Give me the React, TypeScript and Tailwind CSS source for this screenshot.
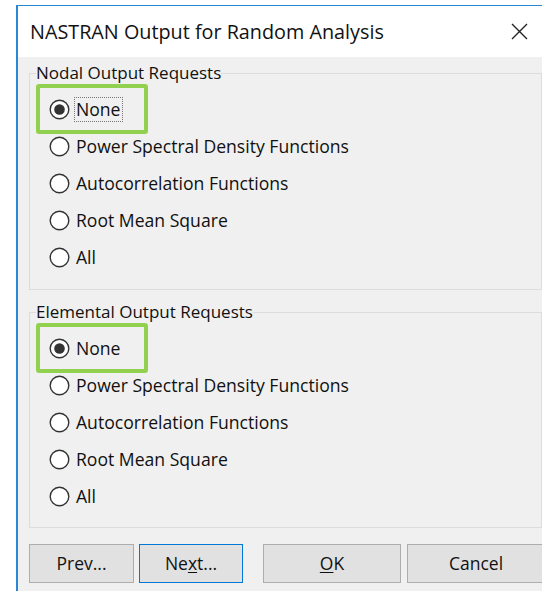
import React, { useState } from "react";

const options = [
  "None",
  "Power Spectral Density Functions",
  "Autocorrelation Functions",
  "Root Mean Square",
  "All",
];

const Radio = ({ checked }: { checked: boolean }) => (
  <svg width="21" height="21" viewBox="0 0 21 21" className="shrink-0">
    <circle cx="10.5" cy="10.5" r="9.3" fill="#ffffff" stroke="#333333" strokeWidth="1.4" />
    {checked && <circle cx="10.5" cy="10.5" r="5.3" fill="#333333" />}
  </svg>
);

const OutputGroup = ({
  title,
  focused,
  className,
}: {
  title: string;
  focused?: boolean;
  className?: string;
}) => {
  const [value, setValue] = useState("None");

  return (
    <fieldset className={`ml-[11px] w-[513px] border border-[#dcdcdc] pt-[6px] ${className ?? ""}`}>
      <legend className="ml-[6px] leading-[24px] text-[17px] text-[#111]">{title}</legend>
      {options.map((opt) => {
        const checked = value === opt;
        return (
          <div
            key={opt}
            className="relative flex h-[37px] items-center pl-[19px] cursor-default"
            onClick={() => setValue(opt)}
          >
            <Radio checked={checked} />
            <span
              className={`ml-[4px] px-[1px] border leading-[23px] text-[17.6px] text-[#111] ${
                focused && checked ? "border-dotted border-[#777]" : "border-transparent"
              }`}
            >
              {opt}
            </span>
            {opt === "None" && (
              <div className="pointer-events-none absolute left-[6px] top-[-7px] h-[50px] w-[112px] rounded-[3px] border-[4px] border-[#92d050]" />
            )}
          </div>
        );
      })}
    </fieldset>
  );
};

const Button = ({
  children,
  width,
  active,
}: {
  children: React.ReactNode;
  width: string;
  active?: boolean;
}) => (
  <button
    className={`${width} h-[39px] border bg-[#e1e1e1] text-[17.5px] text-[#111] ${
      active ? "border-[#0078d7]" : "border-[#adadad]"
    }`}
  >
    {children}
  </button>
);

export default function App() {
  return (
    <div
      className="h-[591px] w-[542px] overflow-hidden bg-white pl-[16px] pt-[5px]"
      style={{ fontFamily: '"Open Sans", "Noto Sans", sans-serif' }}
    >
      <div className="w-[560px] border-l-2 border-t border-[#2b86d6] bg-[#f0f0f0]">
        {/* title bar */}
        <div className="flex h-[51px] items-center bg-white pl-[12px]">
          <span className="text-[19.8px] text-[#111]">NASTRAN Output for Random Analysis</span>
          <svg width="17" height="17" viewBox="0 0 17 17" className="ml-[127px]">
            <path d="M1 1 L16 16 M16 1 L1 16" stroke="#222" strokeWidth="1.4" />
          </svg>
        </div>

        <div className="pt-[4px] pb-[10px]">
          <OutputGroup title="Nodal Output Requests" focused className="pb-[13px]" />
          <OutputGroup title="Elemental Output Requests" className="mt-[10px] pb-[12px]" />

          <div className="ml-[11px] mt-[16px] flex">
            <Button width="w-[105px]">Prev...</Button>
            <Button width="w-[104px] ml-[5px]" active>
              Ne<u className="underline-offset-2">x</u>t...
            </Button>
            <Button width="w-[138px] ml-[20px]">
              <u className="underline-offset-2">O</u>K
            </Button>
            <Button width="w-[138px] ml-[6px]">Cancel</Button>
          </div>
        </div>
      </div>
    </div>
  );
}
